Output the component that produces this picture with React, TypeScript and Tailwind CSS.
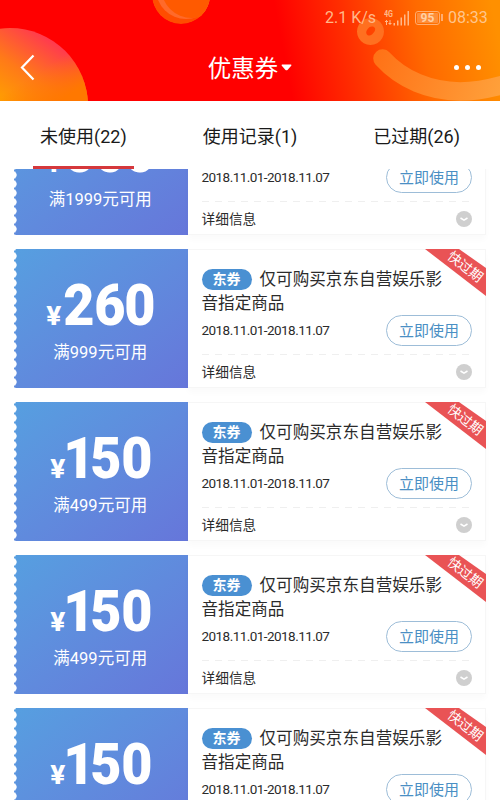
import * as React from "react";
import { cx } from "class-variance-authority";

// ─── Types ────────────────────────────────────────────────────────────────────

interface Coupon {
  id: number;
  amount: string;
  condition: string;
}

// ─── Data ─────────────────────────────────────────────────────────────────────

const TABS = ["未使用(22)", "使用记录(1)", "已过期(26)"];

const COUPONS: Coupon[] = [
  { id: 1, amount: "600", condition: "满1999元可用" },
  { id: 2, amount: "260", condition: "满999元可用" },
  { id: 3, amount: "150", condition: "满499元可用" },
  { id: 4, amount: "150", condition: "满499元可用" },
  { id: 5, amount: "150", condition: "满499元可用" },
];

// ─── Header ───────────────────────────────────────────────────────────────────

function HeaderArt() {
  return (
    <svg className="absolute inset-0" width="500" height="101" viewBox="0 0 500 101">
      <defs>
        <linearGradient id="sky" gradientUnits="userSpaceOnUse" x1="285" y1="60" x2="495" y2="20">
          <stop offset="0" stopColor="#ff0000" />
          <stop offset="0.3" stopColor="#ff2e00" />
          <stop offset="0.65" stopColor="#ff6a00" />
          <stop offset="1" stopColor="#ff9000" />
        </linearGradient>
        <linearGradient id="sun" gradientUnits="userSpaceOnUse" x1="8" y1="108" x2="56" y2="38">
          <stop offset="0" stopColor="#ffa000" />
          <stop offset="0.45" stopColor="#ff7a18" />
          <stop offset="1" stopColor="#ff3355" />
        </linearGradient>
        <linearGradient id="sunEdge" gradientUnits="userSpaceOnUse" x1="40" y1="70" x2="60" y2="101">
          <stop offset="0" stopColor="#ff7800" stopOpacity="0" />
          <stop offset="1" stopColor="#ff7800" />
        </linearGradient>
        <linearGradient id="smile" gradientUnits="userSpaceOnUse" x1="375" y1="50" x2="500" y2="90">
          <stop offset="0" stopColor="#ff7116" />
          <stop offset="1" stopColor="#ffa03a" />
        </linearGradient>
        <clipPath id="ball">
          <circle cx="181" cy="-5" r="29" />
        </clipPath>
      </defs>
      <rect width="500" height="101" fill="url(#sky)" />
      <circle cx="10" cy="106" r="78" fill="url(#sun)" />
      <circle cx="10" cy="106" r="78" fill="url(#sunEdge)" />
      <g clipPath="url(#ball)">
        <circle cx="181" cy="-5" r="29" fill="#ff4d00" />
        <circle cx="186" cy="-11" r="30" fill="#ff6a2a" />
        <circle cx="192" cy="-13" r="31" fill="#ff5a00" />
      </g>
      <path
        d="M370.500 18a13.500 13.500 0 1 0 .01 0zM372 26.500c3 0 4 2.500 2.500 5s-4 4.500-6 4-3-3-1.500-5.500 3-3.500 5-3.500z"
        fill="#ff7020"
        fillRule="evenodd"
      />
      <path
        d="M382.500 58.500C402 80 430 91 460 91.500C478 91.500 492 88 506 84"
        fill="none"
        stroke="url(#smile)"
        strokeWidth="18.500"
        strokeLinecap="round"
      />
    </svg>
  );
}

function StatusBar() {
  return (
    <div className="flex h-[35px] items-center justify-end pr-[12px] text-[16px] leading-none text-[#ffb98a]">
      <span className="w-[54px] whitespace-nowrap">2.1 K/s</span>
      <svg className="ml-[5px]" width="26" height="18" viewBox="0 0 26 18" fill="currentColor">
        <text x="0" y="7.500" fontSize="8.500" fontWeight="700" textLength="9" lengthAdjust="spacingAndGlyphs">
          4G
        </text>
        <path d="M2.500 11v5M1 12.500h3M6 11v5M4.500 14.500h3" stroke="currentColor" strokeWidth="1" />
        <path d="M9.500 14h1.500v2.500H9.500zM13 11.500h1.500v5H13zM16.500 8.500H18v8h-1.500zM20 5.500h1.500v11H20zM23.500 2h1.500v14.500h-1.500z" />
      </svg>
      <div className="ml-[5px] flex items-center">
        <div className="flex h-[14px] w-[25px] items-center justify-center rounded-[3px] border border-[#ffad70] p-px">
          <div className="flex h-full w-full items-center justify-center rounded-[1px] bg-[#ff9a50]/70 text-[12px] font-bold text-[#ffd0a4]">
            95
          </div>
        </div>
        <div className="ml-px h-[7px] w-[2px] bg-[#ffad70]" />
      </div>
      <span className="ml-[5px] w-[40px] whitespace-nowrap text-[#ffc58c]">08:33</span>
    </div>
  );
}

function Header() {
  return (
    <header className="relative h-[101px] shrink-0 overflow-hidden bg-[#ff0000]">
      <HeaderArt />
      <div className="relative">
        <StatusBar />
        <div className="grid h-[65px] grid-cols-3 items-center text-white">
          <svg className="ml-[20px]" width="16" height="27" viewBox="0 0 16 27" fill="none">
            <path d="M13.500 1.500L2 13.500l11.500 12" stroke="currentColor" strokeWidth="2.200" />
          </svg>
          <div className="flex items-center justify-center pt-[4px] whitespace-nowrap text-[23.5px] leading-none">
            <span>优惠券</span>
            <svg className="mb-[4px] ml-[3px]" width="11" height="7" viewBox="0 0 11 7" fill="currentColor">
              <path d="M1 .5h9q.8.5.2 1.300L6.500 5.900q-1 .8-2 0L.8 1.800Q.2 1 1 .5z" />
            </svg>
          </div>
          <div className="mr-[19px] flex justify-end gap-[6px]">
            <i className="size-[5px] rounded-full bg-white" />
            <i className="size-[5px] rounded-full bg-white" />
            <i className="size-[5px] rounded-full bg-white" />
          </div>
        </div>
      </div>
    </header>
  );
}

function Tabs() {
  return (
    <nav className="grid h-[68px] shrink-0 grid-cols-3 bg-white text-[18px] text-[#1a1a1a]">
      {TABS.map((tab, i) => (
        <button key={tab} className="flex flex-col items-center">
          <span className="flex h-[65px] items-center pt-[6px] leading-none">{tab}</span>
          {i === 0 && <span className="h-[3px] w-[101px] bg-[#d5383c]" />}
        </button>
      ))}
    </nav>
  );
}

// ─── Coupon ───────────────────────────────────────────────────────────────────

function ExpiringRibbon() {
  return (
    <svg className="absolute -top-px -right-px" width="61" height="47" viewBox="0 0 61 47">
      <path d="M0 0h34l27 19v28z" fill="#e95355" />
      <text
        x="40.500"
        y="22.500"
        fill="#fff"
        fontSize="13.500"
        textAnchor="middle"
        transform="rotate(38 40.500 17.500)"
      >
        快过期
      </text>
    </svg>
  );
}

/** Price digits: each one sits in its own cell, a leading 1 gets a narrower cell */
function Amount({ value }: { value: string }) {
  return (
    <div className="flex text-[58px] leading-[60px] font-black">
      {value.split("").map((digit, i) => (
        <span
          key={i}
          className={cx("flex justify-center", digit === "1" ? "w-[24px]" : "w-[30.5px]")}
        >
          <span className="inline-block scale-x-[0.93]">{digit}</span>
        </span>
      ))}
    </div>
  );
}

function CouponCard({ coupon }: { coupon: Coupon }) {
  return (
    <article className="flex h-[139px] shrink-0">
      {/* Ticket stub with the torn left edge */}
      <div className="flex w-[173.5px] bg-gradient-to-br from-[#569fe0] to-[#6676da] text-white">
        <div className="w-[4px] bg-[radial-gradient(circle_at_-1.5px_50%,#fff_3.8px,transparent_4.5px)] bg-[length:4px_9px] bg-[position:0_2.5px]" />
        <div className="flex flex-1 flex-col items-center pr-[3px]">
          <div className="mt-[26px] flex h-[60px] items-baseline">
            <span className="mr-[3px] inline-block scale-x-[1.12] text-[25px] leading-[60px] font-extrabold">¥</span>
            <Amount value={coupon.amount} />
          </div>
          <div className="mt-[8px] pr-[2px] text-[16.5px] leading-[20px]">{coupon.condition}</div>
        </div>
      </div>

      <div className="relative flex flex-1 flex-col border border-l-0 border-[#f6f6f6] bg-white pr-[13px] pl-[14px] text-[#2b2b2b] shadow-[0_5px_6px_rgba(0,0,0,0.02)]">
        <ExpiringRibbon />
        <h3 className="mt-[18px] h-[48px] pr-[20px] text-[16.6px] leading-[24px]">
          <span className="mr-[8px] inline-block h-[21px] w-[50px] rounded-full bg-[#4a90d2] text-center align-[1px] text-[14px] leading-[20px] font-bold text-white">
            东券
          </span>
          仅可购买京东自营娱乐影音指定商品
        </h3>
        <div className="-mt-px flex h-[31px] items-center justify-between">
          <span className="text-[13.5px] tracking-[-0.55px]">2018.11.01-2018.11.07</span>
          <button className="h-[31px] w-[86px] rounded-full border border-[#9dbdd8] text-[15px] leading-[28px] text-[#4a8fc4]">
            立即使用
          </button>
        </div>
        <div className="mt-[8px] h-px bg-[repeating-linear-gradient(90deg,#efefef_0_7px,transparent_7px_13px)]" />
        <div className="flex h-[36px] items-center justify-between">
          <span className="pt-[3px] text-[13.7px]">详细信息</span>
          <svg className="mt-[2px]" width="16" height="16" viewBox="0 0 16 16">
            <circle cx="8" cy="8" r="8" fill="#cfcfcf" />
            <path d="M4.500 7L8 9.200 11.500 7" fill="none" stroke="#fff" strokeWidth="1.500" />
          </svg>
        </div>
      </div>
    </article>
  );
}

// ─── Page ─────────────────────────────────────────────────────────────────────

export default function App() {
  return (
    <div className="flex h-[800px] w-[500px] flex-col overflow-hidden bg-white font-[Roboto,'Noto_Sans_CJK_SC',sans-serif]">
      <Header />
      <Tabs />
      <main className="min-h-0 flex-1 overflow-hidden">
        {/* List is scrolled part way through the first coupon */}
        <div className="mt-[-73px] flex flex-col gap-[14px] pr-[14px] pl-[14px]">
          {COUPONS.map((coupon) => (
            <CouponCard key={coupon.id} coupon={coupon} />
          ))}
        </div>
      </main>
    </div>
  );
}
